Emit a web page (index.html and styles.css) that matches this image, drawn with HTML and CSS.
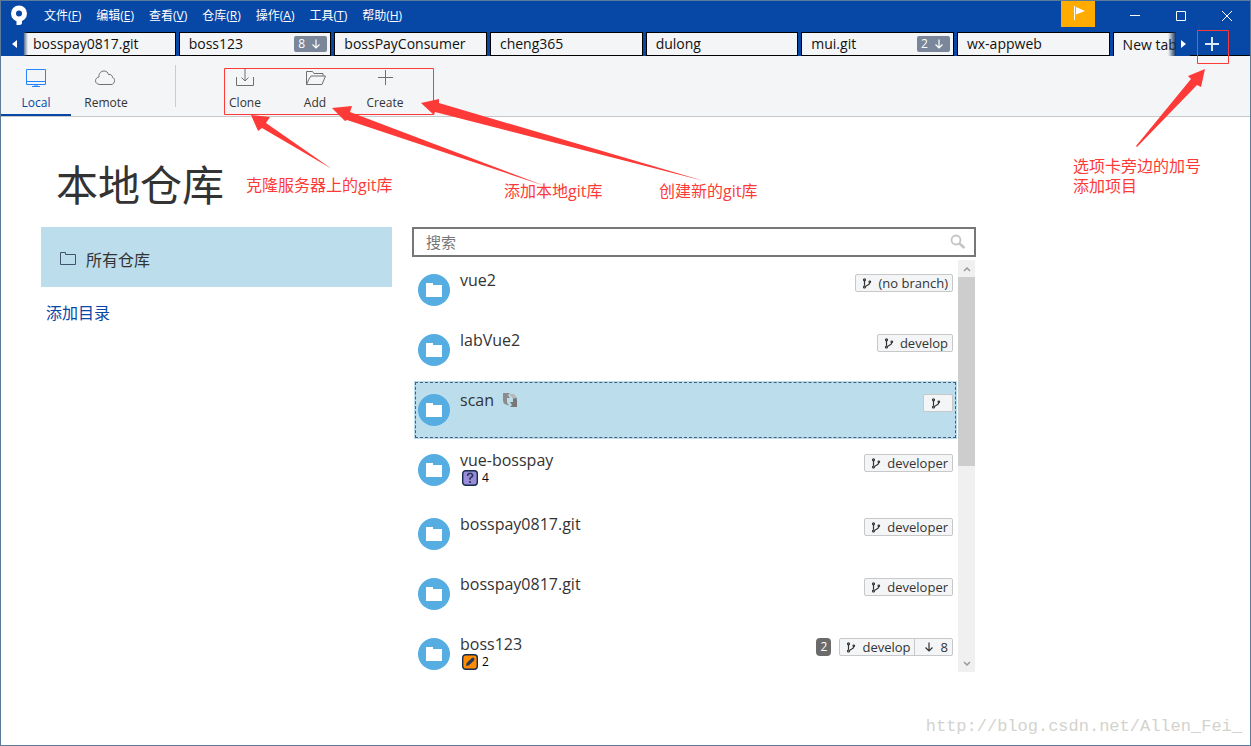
FILE: index.html
```html
<!DOCTYPE html>
<html lang="zh-CN">
<head>
<meta charset="utf-8">
<title>本地仓库</title>
<link rel="stylesheet" href="styles.css">
</head>
<body>
<svg class="sprite" aria-hidden="true">
  <symbol id="repo" viewBox="0 0 32 32"><circle cx="16" cy="16" r="16" fill="#55ade2"/><path d="M8 9h7v2h9v12H8z" fill="#fff"/></symbol>
  <symbol id="branch" viewBox="0 0 10 12"><g fill="none" stroke="#333" stroke-width="1.2"><circle cx="2.5" cy="2.8" r="1"/><circle cx="2.500" cy="10" r="1"/><circle cx="7.800" cy="4.800" r=".8"/><path d="M2.500 3.800v5M7.800 5.600C7.600 8 5 8 3.600 9.500"/></g></symbol>
  <symbol id="down" viewBox="0 0 10 10"><path d="M5 0.500v8M1.500 5.500L5 9l3.500-3.500" fill="none" stroke="currentColor" stroke-width="1.200"/></symbol>
</svg>
<div class="window">
  <header class="titlebar">
    <svg class="logo" viewBox="0 0 18 22"><circle cx="9" cy="8.500" r="5.500" fill="none" stroke="#fff" stroke-width="5"/><path d="M6.500 15.500h5.500v2.500q0 2.500-5.500 2z" fill="#fff"/></svg>
    <nav class="menu">
      <button>文件(<u>F</u>)</button><button>编辑(<u>E</u>)</button><button>查看(<u>V</u>)</button><button>仓库(<u>R</u>)</button><button>操作(<u>A</u>)</button><button>工具(<u>T</u>)</button><button>帮助(<u>H</u>)</button>
    </nav>
    <button class="flag" aria-label="通知"><svg viewBox="0 0 34 26"><path d="M13.500 5v14" stroke="#fff"/><path d="M15 6l9 4-9 3.500z" fill="#fff"/></svg></button>
    <div class="controls">
      <button aria-label="最小化"><svg viewBox="0 0 12 12"><path d="M1 5.500h10"/></svg></button>
      <button aria-label="最大化"><svg viewBox="0 0 12 12"><path d="M1.500 1.500h9v9h-9z"/></svg></button>
      <button aria-label="关闭"><svg viewBox="0 0 12 12"><path d="M1 1l10 10M11 1L1 11"/></svg></button>
    </div>
  </header>
  <div class="tabbar">
    <button class="scroll-left" aria-label="向左"><svg viewBox="0 0 5 8"><path d="M5 0v8L0 4z" fill="#fff"/></svg></button>
    <div class="tabs">
      <button class="tab">bosspay0817.git</button>
      <button class="tab">boss123<span class="count">8 <svg><use href="#down"/></svg></span></button>
      <button class="tab">bossPayConsumer</button>
      <button class="tab">cheng365</button>
      <button class="tab">dulong</button>
      <button class="tab">mui.git<span class="count">2 <svg><use href="#down"/></svg></span></button>
      <button class="tab">wx-appweb</button>
      <button class="tab current">New tab</button>
    </div>
    <button class="scroll-right" aria-label="向右"><svg viewBox="0 0 5 8"><path d="M0 0v8l5-4z" fill="#fff"/></svg></button>
    <button class="new-tab" aria-label="新建选项卡"><svg viewBox="0 0 14 14"><path d="M7 0v14M0 7h14" stroke="#dfe8f5" stroke-width="2"/></svg></button>
  </div>
  <div class="toolbar">
    <button class="tool active"><svg viewBox="0 0 22 20"><path d="M1.500 1.500h19v15h-19zM1.500 13.500h19M7 18.500h8M10 17v1M12 17v1" fill="none" stroke="#2684ff"/></svg>Local</button>
    <button class="tool"><svg viewBox="0 0 22 20"><path d="M5 16.500C2.500 16.500 .5 15 .5 12.800S2 9.500 4 9C3.500 5.500 6 3 9 3c2.500 0 4 1.500 4.500 3.500 2.500-.3 4 1 4 3 1.500.5 2 1.500 2 3 0 2.500-1.500 4-3.500 4z" fill="none" stroke="#707070"/></svg>Remote</button>
    <span class="divider"></span>
    <button class="tool"><svg viewBox="0 0 22 20"><path d="M2.500 9v8.500h17V9M11 0v13M7.500 9.500L11 13l3.500-3.500" fill="none" stroke="#707070"/></svg>Clone</button>
    <button class="tool"><svg viewBox="0 0 22 20"><path d="M2.500 16.500v-13h6l1.500 2h9V8M2.500 16.500H18L21.500 8H7L5 11z" fill="none" stroke="#707070"/></svg>Add</button>
    <button class="tool"><svg viewBox="0 0 22 20"><path d="M11.500 2v15M4 9.500h15" fill="none" stroke="#707070"/></svg>Create</button>
  </div>
  <main class="content">
    <h1>本地仓库</h1>
    <aside class="sidebar">
      <button class="folder"><svg viewBox="0 0 18 16"><path d="M1.500 1.500h5v2h10v10h-15z" fill="none" stroke="#42526e"/></svg>所有仓库</button>
      <a class="add" href="#">添加目录</a>
    </aside>
    <section class="repos">
      <div class="search">
        <input type="text" placeholder="搜索" aria-label="搜索">
        <svg viewBox="0 0 16 16"><circle cx="6" cy="6" r="4.500" fill="none" stroke="#c4c4c4" stroke-width="1.800"/><path d="M9.500 9.500l5 4.500" stroke="#c4c4c4" stroke-width="2.600"/></svg>
      </div>
      <div class="pane">
        <ul class="list">
          <li class="row"><svg class="icon"><use href="#repo"/></svg><div class="name">vue2</div><div class="tags"><span class="tag"><svg><use href="#branch"/></svg>(no branch)</span></div></li>
          <li class="row"><svg class="icon"><use href="#repo"/></svg><div class="name">labVue2</div><div class="tags"><span class="tag"><svg><use href="#branch"/></svg>develop</span></div></li>
          <li class="row selected"><svg class="icon"><use href="#repo"/></svg><div class="name">scan<svg class="sync" viewBox="0 0 16 16"><path d="M1 1h7L6 3l2 3H5v4q0 2 3 3.500Q1 13 1 8.500z" fill="#8c8c8c"/><path d="M15 15H8l2-2-2-3h3V6.500q0-2-3-3.500 7 0 7 5z" fill="#777"/><path d="M7.500 2q6-1 7 4l-3.500.5q-.5-2.500-3.500-3.500z" fill="#b9b9b9"/></svg></div><div class="tags"><span class="tag bare"><svg><use href="#branch"/></svg></span></div></li>
          <li class="row"><svg class="icon"><use href="#repo"/></svg><div class="name">vue-bosspay<div class="state"><svg viewBox="0 0 16 16"><rect x=".7" y=".7" width="14.600" height="14.600" rx="3" fill="#998dd9" stroke="#172b4d" stroke-width="1.400"/><path d="M5.800 6V4.500L7 3.500h2.200l1.300 1.200v1.600L8 8.200v1.500M8 11v2" fill="none" stroke="#253858" stroke-width="1.600"/></svg>4</div></div><div class="tags"><span class="tag"><svg><use href="#branch"/></svg>developer</span></div></li>
          <li class="row"><svg class="icon"><use href="#repo"/></svg><div class="name">bosspay0817.git</div><div class="tags"><span class="tag"><svg><use href="#branch"/></svg>developer</span></div></li>
          <li class="row"><svg class="icon"><use href="#repo"/></svg><div class="name">bosspay0817.git</div><div class="tags"><span class="tag"><svg><use href="#branch"/></svg>developer</span></div></li>
          <li class="row"><svg class="icon"><use href="#repo"/></svg><div class="name">boss123<div class="state"><svg viewBox="0 0 16 16"><rect x=".7" y=".7" width="14.600" height="14.600" rx="3" fill="#ff8b00" stroke="#172b4d" stroke-width="1.400"/><path d="M4 12l.7-3L9.500 4.200Q11 3 12 4t0 2.400L7 11.300z" fill="#253858"/></svg>2</div></div><div class="tags"><span class="number">2</span><span class="tag"><svg><use href="#branch"/></svg>develop<span class="behind"><svg><use href="#down"/></svg>8</span></span></div></li>
        </ul>
        <div class="scrollbar">
          <button aria-label="向上滚动"><svg viewBox="0 0 8 6"><path d="M1 5l3-3 3 3"/></svg></button>
          <span class="thumb"></span>
          <button aria-label="向下滚动"><svg viewBox="0 0 8 6"><path d="M1 1l3 3 3-3"/></svg></button>
        </div>
      </div>
    </section>
  </main>
  <svg class="marks" width="1248" height="210" aria-hidden="true">
    <g fill="none" stroke="#fd3a37"><path d="M223.500 67.500h209v46h-209z"/><path d="M1196.500 29.500h31v33h-31z"/></g>
    <g fill="#fd3a37">
      <path d="M250 114l19 2-4 6 66 46-70-41-4 3z"/>
      <path d="M331 107l20-2-2 6 195 74-198-66-2 1z"/>
      <path d="M420 102l18-4v4l265 78-269-69-1 3z"/>
      <path d="M1204 68l-17 7 3 3-55 67 1 1 60-62 4 2z"/>
    </g>
  </svg>
  <p class="note clone">克隆服务器上的git库</p>
  <p class="note local">添加本地git库</p>
  <p class="note create">创建新的git库</p>
  <p class="note plus">选项卡旁边的加号<br>添加项目</p>
  <p class="watermark">http://blog.csdn.net/Allen_Fei_</p>
</div>
</body>
</html>
```
FILE: styles.css
```css
* { box-sizing: border-box; }
body { margin: 0; font-family: "Open Sans", "Noto Sans CJK SC", sans-serif; color: #333; }
button { margin: 0; padding: 0; border: 0; background: none; font: inherit; color: inherit; }
svg { display: block; flex: none; }
.sprite { position: absolute; width: 0; height: 0; }
.window { position: relative; min-height: 100vh; border: 1px solid #5c7a99; background: #fff; }

.titlebar { display: flex; align-items: flex-start; height: 31px; background: #0747a6; color: #fff; }
.logo { width: 18px; height: 22px; margin: 4px 0 0 9px; }
.menu { display: flex; gap: 15px; margin: 0 auto 0 16px; font-size: 12px; line-height: 30px; }
.menu button { white-space: nowrap; }
.flag svg { width: 34px; height: 26px; background: #ffab00; }
.controls { display: flex; margin-left: 17px; }
.controls button { display: grid; place-items: center; width: 46px; height: 30px; }
.controls svg { width: 12px; height: 12px; fill: none; stroke: #fff; }

.tabbar { display: flex; height: 24px; background: #0747a6; }
.scroll-left, .scroll-right { display: grid; place-items: center; flex: none; width: 22px; }
.scroll-left { padding-left: 4px; }
.scroll-left svg, .scroll-right svg { width: 5px; height: 8px; }
.scroll-right { width: 14px; }
.tabs { position: relative; display: flex; flex: 1; gap: 3px; min-width: 0; overflow: hidden; }
.tabs::before, .tabs::after { content: ""; position: absolute; top: 0; bottom: 0; width: 5px; }
.tabs::before { left: 0; background: linear-gradient(90deg, #34527c, transparent); }
.tabs::after { right: 0; width: 8px; background: linear-gradient(270deg, #10305f, transparent); }
.tab { display: flex; align-items: center; justify-content: space-between; flex: 0 0 13.24%; padding: 0 3px 0 9px; border: 1px solid #000; background: #f4f5f7; color: #111; font-size: 14px; line-height: 22px; white-space: nowrap; }
.tab.current { border-bottom: 0; }
.count { display: flex; align-items: center; justify-content: space-between; width: 33px; height: 16px; padding: 0 6px 0 4px; border-radius: 2px; background: #7a869a; color: #fff; font-size: 12px; }
.count svg { width: 10px; height: 10px; }
.new-tab { display: grid; place-items: center; width: 60px; padding-right: 16px; border-bottom: 1px solid #000; }
.new-tab svg { width: 14px; height: 14px; }

.toolbar { display: flex; height: 61px; border-bottom: 1px solid #c8c8c8; background: #f4f5f7; }
.tool { display: flex; flex-direction: column; align-items: center; width: 70px; padding-top: 12px; font-size: 12px; line-height: 18px; gap: 6px; }
.tool svg { width: 22px; height: 20px; }
.tool.active { border-bottom: 2px solid #0747a6; color: #0747a6; }
.divider { width: 1px; height: 42px; margin: 9px 34px 0; background: #ccc; }

.content { display: grid; grid-template-columns: 351fr 564fr 254fr; column-gap: 20px; padding-left: 40px; }
h1 { grid-column: 1 / -1; margin: 38px 0 12px 15px; font-size: 42px; font-weight: 400; line-height: 60px; }
.folder { display: flex; align-items: center; gap: 9px; width: 100%; height: 60px; padding: 3px 0 0 18px; background: #bbddec; font-size: 16px; }
.folder svg { width: 18px; height: 16px; }
.add { display: inline-block; margin: 14px 0 0 5px; color: #0747a6; font-size: 16px; line-height: 24px; text-decoration: none; }
.search { display: flex; align-items: center; height: 30px; padding: 0 8px 0 12px; border: 2px solid #777; }
.search input { flex: 1; min-width: 0; padding: 0; border: 0; outline: 0; background: none; font: inherit; font-size: 15px; }
.search input::placeholder { color: #777; opacity: 1; }
.search svg { width: 16px; height: 16px; }

.pane { display: flex; margin-top: 3px; padding-right: 1px; }
.list { flex: 1; min-width: 0; margin: 0; padding: 1px 1px 0 2px; list-style: none; }
.row { display: flex; align-items: flex-start; gap: 10px; min-height: 58px; margin-bottom: 2px; padding: 0 4px 0 4px; }
.row.selected { background: #bbddec; outline: 1px dashed #42607c; outline-offset: -2px; }
.icon { width: 32px; height: 32px; margin-top: 13px; }
.name { flex: 1; padding-top: 7px; font-size: 16px; line-height: 24px; }
.sync { display: inline-block; width: 16px; height: 16px; margin-left: 8px; vertical-align: -2px; }
.state { display: flex; align-items: center; gap: 4px; height: 16px; margin: -2px 0 17px 2px; color: #000; font-size: 12px; line-height: 16px; }
.state svg { width: 16px; height: 16px; }
.tags { display: flex; gap: 8px; padding-top: 13px; }
.tag { display: flex; align-items: center; gap: 6px; height: 18px; padding: 0 4px 0 6px; border: 1px solid #c8c8c8; border-radius: 2px; background: #f4f5f7; font-size: 13px; line-height: 16px; white-space: nowrap; }
.tag svg { width: 10px; height: 12px; }
.tag.bare { padding: 0 11px 0 7px; }
.behind { display: flex; align-items: center; gap: 7px; height: 16px; margin-left: -3px; padding-left: 9px; border-left: 1px solid #c8c8c8; }
.behind svg { height: 10px; }
.number { width: 15px; height: 18px; border-radius: 4px; background: #6b6b6b; color: #fff; font-size: 12px; line-height: 18px; text-align: center; }
.scrollbar { display: flex; flex-direction: column; width: 17px; height: 412px; background: #f0f0f0; }
.scrollbar button { display: grid; place-items: center; height: 17px; }
.scrollbar svg { width: 8px; height: 6px; fill: none; stroke: #999; stroke-width: 1.5; }
.thumb { height: 189px; margin-bottom: auto; background: #cdcdcd; }

.marks { position: absolute; top: 0; left: 0; pointer-events: none; }
.note { position: absolute; margin: 0; color: #fd3a37; font-size: 16px; line-height: 20px; white-space: nowrap; }
.note.clone { left: 245px; top: 174px; }
.note.local { left: 503px; top: 180px; }
.note.create { left: 658px; top: 180px; }
.note.plus { left: 1072px; top: 155px; }
.watermark { position: absolute; right: 8px; bottom: 7px; margin: 0; color: #d3d3cd; font-family: "Liberation Mono", monospace; font-size: 17px; line-height: 22px; }
```
